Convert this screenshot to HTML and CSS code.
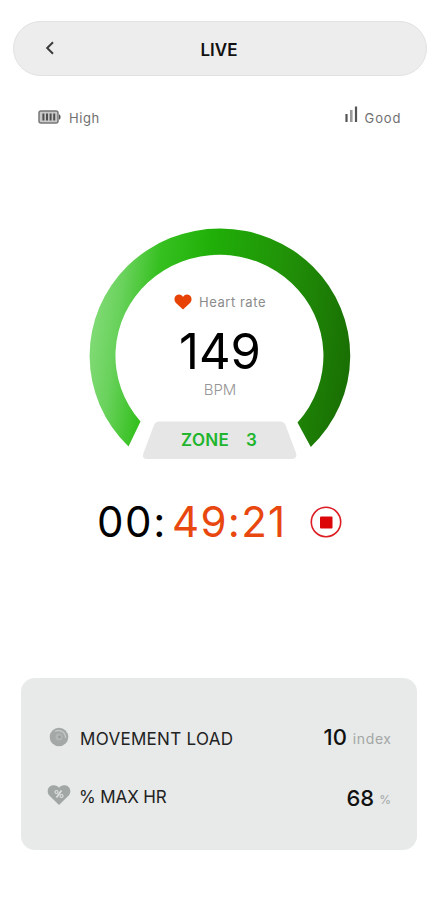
FILE: index.html
```html
<!DOCTYPE html>
<html lang="en">
<head>
<meta charset="utf-8">
<title>Live</title>
<link rel="stylesheet" href="styles.css">
</head>
<body>
<main class="screen">
  <header class="topbar">
    <svg class="back" width="10" height="14" viewBox="0 0 10 14"><path d="M8 1.2 2.2 7 8 12.8" fill="none" stroke="#3c3c3c" stroke-width="2"/></svg>
    <h1 class="title">LIVE</h1>
  </header>

  <section class="status">
    <div class="status-item">
      <svg width="23" height="14" viewBox="0 0 23 14">
        <rect x="1" y="1" width="19" height="12" rx="2" fill="#c9c9c9" stroke="#777" stroke-width="1.5"/>
        <path d="M21 4.2q1.600.4 1.600 2.800t-1.600 2.800z" fill="#555"/>
        <path d="M5.400 3.500v7M9 3.500v7M12.600 3.500v7M16.200 3.500v7" stroke="#505050" stroke-width="2"/>
      </svg>
      <span class="high">High</span>
    </div>
    <div class="status-item signal">
      <svg width="13" height="17" viewBox="0 0 13 17"><path d="M1.500 8V16" stroke="#555" stroke-width="2.200"/><path d="M6.300 4v12" stroke="#999" stroke-width="2.600"/><path d="M11 .5V16" stroke="#555" stroke-width="2.200"/></svg>
      <span class="good">Good</span>
    </div>
  </section>

  <section class="gauge">
    <svg class="arc" width="262" height="232" viewBox="89 228 262 232">
      <defs>
        <linearGradient id="zone" gradientUnits="userSpaceOnUse" x1="90" y1="370" x2="345" y2="405">
          <stop offset="0" stop-color="#7dd971"/>
          <stop offset=".08" stop-color="#69d25c"/>
          <stop offset=".21" stop-color="#36c020"/>
          <stop offset=".4" stop-color="#20af08"/>
          <stop offset=".7" stop-color="#219108"/>
          <stop offset="1" stop-color="#196f03"/>
        </linearGradient>
      </defs>
      <path d="M128.5 446.5A130.3 127.3 0 1 1 310.8 447L297.5 422.5A104 101 0 1 0 140.5 421.5Z" fill="url(#zone)"/>
      <path d="M159 421.5H280Q284 421.5 285.5 425L296 453Q297.5 459 292 459H147Q141.5 459 143.5 453L154 425Q155.5 421.5 159 421.5Z" fill="#e6e6e6"/>
    </svg>
    <div class="reading">
      <div class="label">
        <svg width="18" height="16" viewBox="0 0 18 16"><path d="M9 15.500 1.700 8.700C-.8 5.800.5.7 4.800.6 6.900.5 8.200 1.700 9 3 9.800 1.700 11.100.5 13.200.6 17.500.7 18.800 5.800 16.300 8.700Z" fill="#e84307"/></svg>
        <span class="label-text">Heart rate</span>
      </div>
      <div class="bpm">149</div>
      <div class="unit">BPM</div>
      <div class="zone"><span class="zone-name">ZONE</span><span>3</span></div>
    </div>
  </section>

  <section class="timer">
    <span class="hours">00:</span><span class="minutes">49:21</span>
    <svg class="stop" width="32" height="32" viewBox="0 0 32 32"><circle cx="16" cy="16" r="14.700" fill="#fff" stroke="#dc1e24" stroke-width="1.600"/><rect x="10" y="10.500" width="12.500" height="12" rx="1" fill="#dc0508"/></svg>
  </section>

  <section class="card">
    <div class="row">
      <svg class="icon" width="24" height="22" viewBox="0 0 24 22"><circle cx="12" cy="11" r="9.300" fill="#a4a8a7"/><path d="M8 5.500A7 7 0 0 1 18.500 12" fill="none" stroke="#c3c7c6" stroke-width="1.300"/><circle cx="12" cy="11" r="3.500" fill="#b2b6b5"/><circle cx="12.500" cy="11" r="1.400" fill="#979b9a"/></svg>
      <span class="name load">MOVEMENT LOAD</span>
      <span class="value ten">10</span><span class="suffix index">index</span>
    </div>
    <div class="row second">
      <svg class="icon heart" width="24" height="22" viewBox="0 0 24 22"><path d="M12 21 2.300 11.500C-1 7.500 1 1.500 6.300 1.200 9 1.100 11 2.200 12 3.800 13 2.200 15 1.100 17.700 1.200 23 1.500 25 7.500 21.700 11.500Z" fill="#a1a7a5"/><path d="m9.500 13.500 5-7" stroke="#e0e5e3" stroke-width="1.500"/><circle cx="9.500" cy="8" r="1.500" fill="none" stroke="#dce1df" stroke-width="1.200"/><circle cx="14.500" cy="12" r="1.500" fill="none" stroke="#dce1df" stroke-width="1.200"/></svg>
      <span class="name maxhr">% MAX HR</span>
      <span class="value sixty">68</span><span class="suffix percent">%</span>
    </div>
  </section>
</main>
</body>
</html>
```
FILE: styles.css
```css
* { box-sizing: border-box; }
body {
  margin: 0;
  background: #fff;
  color: #111;
  font-family: Inter, "Liberation Sans", sans-serif;
}
svg { display: block; flex: none; }
.screen {
  width: 438px;
  height: 900px;
  padding: 21px 11px 0 13px;
  overflow: hidden;
}
.topbar {
  display: grid;
  grid-template-columns: 32px 1fr 32px;
  align-items: center;
  height: 55px;
  padding: 0 1px;
  border: 1px solid #e2e2e2;
  border-radius: 28px;
  background: #ededed;
}
.back { margin: -2px 0 0 30px; }
.title {
  margin: 3px 2px 0 0;
  text-align: center;
  font-size: 17px;
  line-height: 20px;
  font-weight: 600;
}
.status {
  display: flex;
  justify-content: space-between;
  height: 34px;
  margin-top: 24px;
  padding: 0 26px 0 25px;
}
.status-item {
  display: flex;
  align-items: center;
  gap: 8px;
  font-size: 13px;
  line-height: 34px;
  color: #6f6f6f;
}
.high { padding-top: 1px; letter-spacing: .6px; }
.good { padding-top: 1px; letter-spacing: .9px; margin-right: -.4px; }
.signal svg { margin-top: -5px; }
.signal { gap: 7px; }
.gauge {
  display: grid;
  width: 262px;
  height: 232px;
  margin: 94px 0 0 76px;
}
.arc, .reading { grid-area: 1 / 1; }
.reading {
  display: flex;
  flex-direction: column;
  align-items: center;
  padding-top: 64px;
}
.label {
  display: flex;
  align-items: center;
  gap: 7px;
  height: 20px;
  font-size: 13px;
  color: #8b8b8b;
}
.label-text { letter-spacing: .55px; }
.bpm {
  height: 60px;
  margin-top: 10px;
  font-size: 49px;
  line-height: 60px;
  color: #000;
}
.unit {
  height: 20px;
  margin-top: -2px;
  font-size: 15px;
  line-height: 20px;
  font-weight: 300;
  color: #969696;
}
.zone {
  display: flex;
  gap: 17px;
  margin: 30px 2px 0 0;
  font-size: 17px;
  line-height: 20px;
  font-weight: 600;
  color: #20b52c;
}
.zone-name { letter-spacing: .3px; }
.timer {
  display: flex;
  align-items: center;
  height: 50px;
  margin: 37px 0 0 84px;
  font-size: 42px;
  line-height: 50px;
}
.hours { width: 75px; color: #000; letter-spacing: 1.6px; }
.minutes { width: 138px; color: #e8470f; letter-spacing: 1.3px; }
.card {
  width: 396px;
  height: 172px;
  margin: 131px 0 0 8px;
  padding: 46px 26px 0;
  border-radius: 14px;
  background: #e7eae9;
}
.row {
  display: flex;
  align-items: center;
  height: 26px;
}
.second { margin-top: 34px; }
.icon { margin-right: 8px; }
.heart { margin-top: -5px; }
.name {
  flex: 1;
  font-size: 17px;
  color: #222;
}
.load { padding: 3px 0 0 1px; letter-spacing: .3px; }
.maxhr { letter-spacing: -.1px; }
.value {
  font-size: 22px;
  font-weight: 500;
}
.ten { margin-top: -1px; }
.sixty { margin-top: 2px; }
.suffix {
  margin-left: 6px;
  padding-top: 3px;
  font-size: 14px;
  color: #a3a6a5;
}
.index { letter-spacing: .6px; margin-right: -.6px; }
.percent {
  margin-left: 5px;
  padding-top: 5px;
  font-size: 12px;
}
```
